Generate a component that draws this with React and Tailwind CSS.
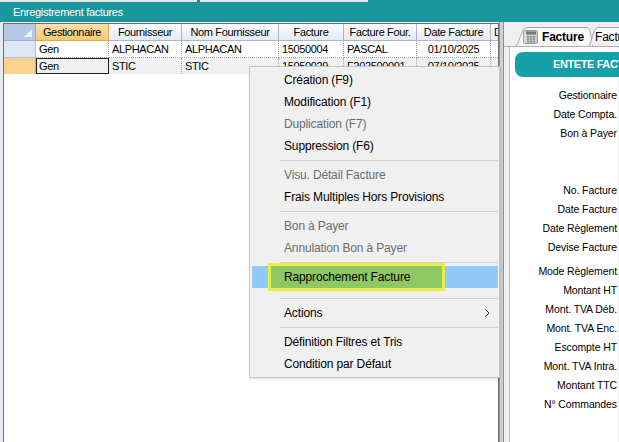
import React from 'react'

const cols = [
  { w: 'w-[73px]', head: 'Gestionnaire', r1: 'Gen', r2: 'Gen', center: false, sel: true },
  { w: 'w-[73px]', head: 'Fournisseur', r1: 'ALPHACAN', r2: 'STIC', center: false },
  { w: 'w-[97px]', head: 'Nom Fournisseur', r1: 'ALPHACAN', r2: 'STIC', center: false },
  { w: 'w-[65px]', head: 'Facture', r1: '15050004', r2: '15050029', center: false },
  { w: 'w-[73px]', head: 'Facture Four.', r1: 'PASCAL', r2: 'F202500001', center: false },
  { w: 'w-[74px]', head: 'Date Facture', r1: '01/10/2025', r2: '07/10/2025', center: true },
]

const menu = [
  { t: 'Création (F9)' },
  { t: 'Modification (F1)' },
  { t: 'Duplication (F7)', off: true },
  { t: 'Suppression (F6)' },
  { sep: true },
  { t: 'Visu. Détail Facture', off: true },
  { t: 'Frais Multiples Hors Provisions' },
  { sep: true },
  { t: 'Bon à Payer', off: true },
  { t: 'Annulation Bon à Payer', off: true },
  { sep: true },
  { t: 'Rapprochement Facture', hot: true },
  { sep: true, tall: true },
  { t: 'Actions', sub: true },
  { sep: true },
  { t: 'Définition Filtres et Tris' },
  { t: 'Condition par Défaut' },
]

const labels = [
  { t: 'Gestionnaire', m: 'mt-[9px]' },
  { t: 'Date Compta.', m: '' },
  { t: 'Bon à Payer', m: '' },
  { t: 'No. Facture', m: 'mt-[38px]' },
  { t: 'Date Facture', m: '' },
  { t: 'Date Règlement', m: '' },
  { t: 'Devise Facture', m: '' },
  { t: 'Mode Règlement', m: 'mt-[5px]' },
  { t: 'Montant HT', m: '' },
  { t: 'Mont. TVA Déb.', m: '' },
  { t: 'Mont. TVA Enc.', m: '' },
  { t: 'Escompte HT', m: '' },
  { t: 'Mont. TVA Intra.', m: '' },
  { t: 'Montant TTC', m: '' },
  { t: 'N° Commandes', m: '' },
]

function CalcIcon() {
  return (
    <svg width="15" height="14" viewBox="0 0 15 14" className="shrink-0">
      <rect x="0.5" y="0.5" width="14" height="13" rx="1" fill="#c9cccc" stroke="#9a9d9d" />
      <rect x="3" y="1.5" width="10" height="3" fill="#6f7a76" />
      <rect x="1.5" y="1.5" width="1.5" height="11" fill="#e6e8e8" />
      {[0, 1, 2].map((r) =>
        [0, 1, 2].map((c) => (
          <rect key={r + '-' + c} x={4 + c * 3} y={6 + r * 2.4} width="2.2" height="1.7" fill="#8a8f8f" />
        ))
      )}
    </svg>
  )
}

function Tab({ label, active }) {
  return (
    <div className={'relative h-[19px] shrink-0 ' + (active ? 'w-[78px]' : 'w-[60px] -ml-[5px]')}>
      <svg className="absolute inset-0" width={active ? 78 : 60} height="19" viewBox={active ? '0 0 78 19' : '0 0 60 19'}>
        <defs>
          <linearGradient id={'tg' + (active ? 'a' : 'b')} x1="0" y1="0" x2="0" y2="1">
            <stop offset="0" stopColor="#ffffff" />
            <stop offset="1" stopColor={active ? '#f7f7f7' : '#ececec'} />
          </linearGradient>
        </defs>
        <path
          d={active ? 'M0.5 19 C4 19 6 0.5 12 0.5 L72 0.5 C75 0.5 76 8 77.5 19' : 'M0.5 19 C3 19 5 0.5 10 0.5 L60 0.5'}
          fill={'url(#tg' + (active ? 'a' : 'b') + ')'}
          stroke="#a3a3a3"
        />
      </svg>
      <div className={'relative flex items-center h-full ' + (active ? 'pl-[8px] gap-[4px]' : 'pl-[7px]')}>
        {active && <CalcIcon />}
        <span className={'text-[12px] text-black tracking-[-0.2px] ' + (active ? 'font-bold' : '')}>{label}</span>
      </div>
    </div>
  )
}

export default function App() {
  return (
    <div className="relative w-[619px] h-[442px] overflow-hidden bg-white font-['Liberation_Sans',Arial,sans-serif] text-black">
      {/* top strip */}
      <div className="flex h-[2px]">
        <div className="w-[197px] bg-[#e4e8ec]" />
        <div className="w-[3px] bg-[#1a959d]" />
        <div className="w-[168px] bg-[#e4e8ec]" />
        <div className="flex-1 bg-[#1a959d]" />
      </div>

      {/* title bar */}
      <div className="h-[20px] bg-[#1a969e] flex items-center pl-[13px]">
        <span className="text-white text-[11px] tracking-[-0.3px]">Enregistrement factures</span>
      </div>

      <div className="flex h-[420px]">
        {/* grid area */}
        <div className="w-[499px] shrink-0 flex bg-[#e6ebf1] pt-[1px] pl-[3px]">
          <div className="flex-1 flex flex-col bg-white border-l border-t border-r border-[#707070] overflow-hidden text-[11px] tracking-[-0.35px]">
            {/* header */}
            <div className="flex h-[17px] shrink-0">
              <div className="w-[32px] shrink-0 relative bg-[#b5c9e7] border-r border-b border-[#9fb0c8]">
                <svg className="absolute right-[3px] bottom-[3px]" width="8" height="8" viewBox="0 0 8 8">
                  <path d="M8 0 L8 8 L0 8 Z" fill="#eef3fa" />
                </svg>
              </div>
              {cols.map((c) => (
                <div
                  key={c.head}
                  className={
                    c.w +
                    ' shrink-0 flex items-center justify-center border-r border-b whitespace-nowrap overflow-hidden ' +
                    (c.sel
                      ? 'bg-gradient-to-b from-[#fde2ae] to-[#f6c878] border-[#e0a94a]'
                      : 'bg-gradient-to-b from-[#fbfcfe] to-[#e5ebf4] border-[#abb7c8]')
                  }
                >
                  {c.head}
                </div>
              ))}
              <div className="flex-1 pl-[3px] flex items-center overflow-hidden bg-gradient-to-b from-[#fbfcfe] to-[#e5ebf4] border-b border-[#abb7c8]">
                D
              </div>
            </div>

            {/* row 1 */}
            <div className="flex h-[17px] shrink-0">
              <div className="w-[32px] shrink-0 bg-[#dee7f4] border-r border-b border-[#b3c1d4]" />
              {cols.map((c) => (
                <div
                  key={c.head}
                  className={
                    c.w +
                    ' shrink-0 flex items-center border-r border-b border-dotted border-[#a8a8a8] whitespace-nowrap overflow-hidden ' +
                    (c.center ? 'justify-center' : 'pl-[3px]')
                  }
                >
                  {c.r1}
                </div>
              ))}
              <div className="flex-1 border-b border-dotted border-[#a8a8a8]" />
            </div>

            {/* row 2 */}
            <div className="flex h-[16px] shrink-0 bg-[#f0f0f0]">
              <div className="w-[32px] shrink-0 bg-[#fbd28e] border-r border-[#e0a94a]" />
              {cols.map((c) => (
                <div
                  key={c.head}
                  className={
                    c.w +
                    ' shrink-0 flex items-center whitespace-nowrap overflow-hidden ' +
                    (c.sel ? 'border border-[#202020] pl-[2px] ' : 'border-r border-dotted border-[#a8a8a8] ') +
                    (c.center ? 'justify-center' : c.sel ? '' : 'pl-[3px]')
                  }
                >
                  {c.r2}
                </div>
              ))}
              <div className="flex-1" />
            </div>
            <div className="flex-1 bg-white" />
          </div>
        </div>

        {/* splitter */}
        <div className="w-[5px] shrink-0 bg-[#d0d0d0] border-l border-r border-[#8e8e8e]" />

        {/* right panel */}
        <div className="flex-1 flex flex-col bg-[#f0f0f0] overflow-hidden">
          <div className="h-[25px] shrink-0 flex items-end pl-[11px] border-b border-[#b0b0b0]">
            <Tab label="Facture" active />
            <Tab label="Facture" />
          </div>
          <div className="flex-1 flex">
            <div className="w-[6px] shrink-0 bg-[#f0f0f0] border-r border-[#c4c4c4]" />
            <div className="w-[108px] shrink-0 bg-white pt-[5px] flex flex-col overflow-visible">
              <div className="ml-[5px] h-[25px] w-[140px] shrink-0 rounded-[8px] bg-[#15a0aa] flex items-center pl-[38px]">
                <span className="text-white font-bold text-[11px] tracking-[-0.4px] whitespace-nowrap">ENTETE FACTURE</span>
              </div>
              <div className="w-[107px] flex flex-col items-end text-[10.5px] tracking-[-0.1px]">
                {labels.map((l) => (
                  <div key={l.t} className={'h-[19px] leading-[19px] whitespace-nowrap ' + l.m}>
                    {l.t}
                  </div>
                ))}
              </div>
            </div>
          </div>
        </div>
      </div>

      {/* context menu */}
      <div className="absolute left-[249px] top-[66px] w-[251px] h-[312px] bg-[#f0f0f0] border border-[#c6c6c6] shadow-[1px_1px_2px_rgba(0,0,0,0.15)] pt-[2px] text-[12px] tracking-[-0.15px]">
        {menu.map((m, i) =>
          m.sep ? (
            <div key={i} className={'flex ' + (m.tall ? 'h-[14px] items-start pt-[10px]' : 'h-[7px] items-center')}>
              <div className="ml-[30px] mr-[1px] flex-1 h-px bg-[#d2d2d2]" />
            </div>
          ) : (
            <div
              key={i}
              className={
                'relative h-[22px] flex items-center ' +
                (m.hot ? 'ml-[2px] mr-[1px] pl-[32px] bg-[#91c9f7]' : 'pl-[34px]')
              }
            >
              {m.hot && (
                <div className="absolute left-[16px] -top-[3px] w-[177px] h-[28px] bg-[#8fc760] border-[3px] border-[#e6ef46]" />
              )}
              <span className={'relative ' + (m.off ? 'text-[#6d6d6d]' : 'text-black')}>{m.t}</span>
              {m.sub && (
                <svg className="absolute left-[235px] top-[7px]" width="5" height="8" viewBox="0 0 5 8">
                  <path d="M0.5 0.5 L4 4 L0.5 7.5" fill="none" stroke="#333" strokeWidth="1" />
                </svg>
              )}
            </div>
          )
        )}
      </div>
    </div>
  )
}
